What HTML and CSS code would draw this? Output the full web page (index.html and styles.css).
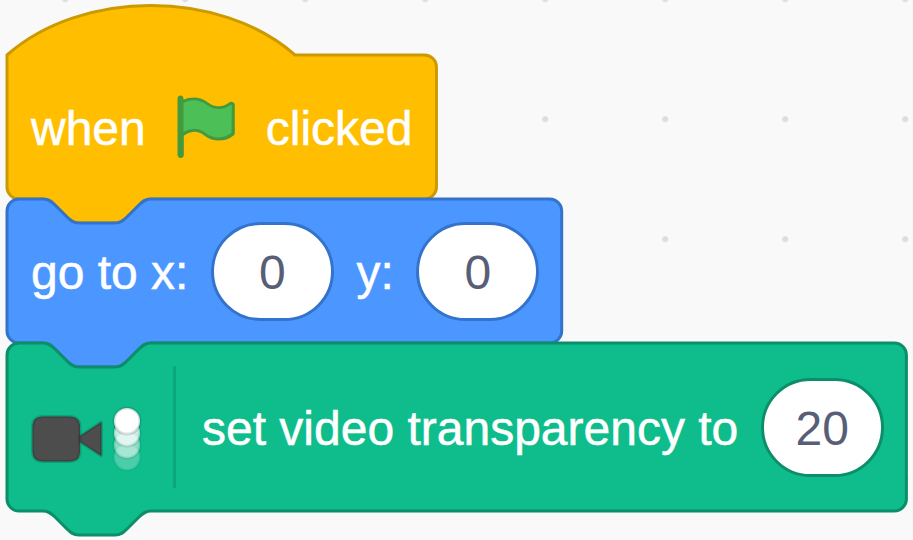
FILE: index.html
```html
<!DOCTYPE html>
<html lang="en">
<head>
<meta charset="utf-8">
<title>Blocks workspace</title>
<link rel="stylesheet" href="styles.css">
</head>
<body>
<main class="workspace">
  <div class="stack">
    <section class="block block-event">
      <svg class="shape" width="430" height="144" viewBox="0 0 143.33 48" aria-hidden="true">
        <path d="M0,0 c25,-22 71,-22 96,0 H139.15 a4,4 0 0,1 4,4 v40 a4,4 0 0,1 -4,4 H48 c-2,0 -3,1 -4,2 l-4,4 c-1,1 -2,2 -4,2 h-12 c-2,0 -3,-1 -4,-2 l-4,-4 c-1,-1 -2,-2 -4,-2 H4 a4,4 0 0,1 -4,-4 z"/>
      </svg>
      <span class="label">when</span>
      <svg class="flag" viewBox="0 0 24 24" aria-hidden="true">
        <path fill="#45993d" d="M20.8 3.7c-.4-.2-.9-.1-1.2.2-2 1.6-4.8 1.6-6.8 0-2.3-1.9-5.6-2.3-8.3-1v-.4c0-.6-.5-1-1-1s-1 .4-1 1v18.8c0 .5.5 1 1 1h.1c.5 0 1-.4 1-1v-6.4c1-.7 2.1-1.2 3.4-1.3 1.2 0 2.4.4 3.4 1.2 2.9 2.3 7 2.3 9.8 0 .3-.2.4-.5.4-.9V4.7c0-.5-.3-.9-.8-1z"/>
        <path fill="#4cbf56" d="M20.5 13.9C18 16 14.4 16 11.9 14c-1.1-.9-2.5-1.4-4-1.4-1.2.1-2.3.5-3.4 1.1V4c2.5-1.4 5.5-1.1 7.7.6 2.4 1.9 5.7 1.9 8.1 0h.1c.1 0 .1 0 .2.1z"/>
      </svg>
      <span class="label">clicked</span>
    </section>
    <section class="block block-motion">
      <svg class="shape" width="555" height="144" viewBox="0 0 185 48" aria-hidden="true">
        <path d="M0,4 A4,4 0 0,1 4,0 H12 c2,0 3,1 4,2 l4,4 c1,1 2,2 4,2 h12 c2,0 3,-1 4,-2 l4,-4 c1,-1 2,-2 4,-2 H180.9 a4,4 0 0,1 4,4 v40 a4,4 0 0,1 -4,4 H48 c-2,0 -3,1 -4,2 l-4,4 c-1,1 -2,2 -4,2 h-12 c-2,0 -3,-1 -4,-2 l-4,-4 c-1,-1 -2,-2 -4,-2 H4 a4,4 0 0,1 -4,-4 z"/>
      </svg>
      <span class="label">go to x:</span>
      <span class="value">0</span>
      <span class="label">y:</span>
      <span class="value">0</span>
    </section>
    <section class="block block-video">
      <svg class="shape" width="900" height="168" viewBox="0 0 300 56" aria-hidden="true">
        <path d="M0,4 A4,4 0 0,1 4,0 H12 c2,0 3,1 4,2 l4,4 c1,1 2,2 4,2 h12 c2,0 3,-1 4,-2 l4,-4 c1,-1 2,-2 4,-2 H295.8 a4,4 0 0,1 4,4 v48 a4,4 0 0,1 -4,4 H48 c-2,0 -3,1 -4,2 l-4,4 c-1,1 -2,2 -4,2 h-12 c-2,0 -3,-1 -4,-2 l-4,-4 c-1,-1 -2,-2 -4,-2 H4 a4,4 0 0,1 -4,-4 z"/>
      </svg>
      <svg class="camera" viewBox="0 0 120 120" aria-hidden="true">
        <g fill="#4d4d4d" stroke="#000" stroke-opacity=".15" stroke-width="3">
          <path d="M12 49.500H38.500Q49 49.500 49 60V84Q49 94.500 38.500 94.500H12Q1.500 94.500 1.500 84V60Q1.500 49.500 12 49.500z"/>
          <path d="M49 69L69.500 55.500Q70.500 54.500 70.500 56.500V87.500Q70.500 89.500 69.500 88.500L49 75z"/>
        </g>
        <g fill="#fff" stroke="#000" stroke-opacity=".12" stroke-width="3">
          <circle cx="96" cy="90" r="13" opacity=".25"/>
          <circle cx="96" cy="78" r="13" opacity=".5"/>
          <circle cx="96" cy="66" r="13" opacity=".75"/>
          <circle cx="96" cy="54" r="13"/>
        </g>
      </svg>
      <span class="divider"></span>
      <span class="label">set video transparency to</span>
      <span class="value">20</span>
    </section>
  </div>
</main>
</body>
</html>
```
FILE: styles.css
```css
* {
  box-sizing: border-box;
}

body {
  margin: 0;
}

.workspace {
  width: 913px;
  height: 540px;
  overflow: hidden;
  padding: 55px 0 0 7px;
  background-color: #f9f9f9;
  background-image: radial-gradient(circle, #ddd 2.6px, rgba(221, 221, 221, 0) 3.4px);
  background-size: 120px 120px;
  background-position: 5.200px 59.200px;
}

.stack {
  display: flex;
  flex-direction: column;
  align-items: flex-start;
  font-family: "Liberation Sans", Arial, sans-serif;
  font-size: 48px;
  line-height: 56px;
  color: #fff;
}

.block {
  position: relative;
  display: flex;
  align-items: center;
  gap: 24px;
  height: 144px;
  padding: 0 24px;
  white-space: nowrap;
}

.block-event {
  --fill: #ffbf00;
  --edge: #cc9900;
}

.block-motion {
  --fill: #4c97ff;
  --edge: #3373cc;
}

.block-video {
  --fill: #0fbd8c;
  --edge: #0b8e69;
  height: 168px;
}

.shape {
  position: absolute;
  top: 0;
  left: 0;
  overflow: visible;
  fill: var(--fill);
  stroke: var(--edge);
  stroke-width: 1;
}

.label,
.value,
.flag,
.camera,
.divider {
  position: relative;
  flex: none;
}

.label {
  padding-top: 4px;
  -webkit-text-stroke: .5px #fff;
}

.flag {
  width: 72px;
  height: 72px;
}

.value {
  width: 123px;
  height: 99px;
  margin: 0 -1.500px;
  padding-top: 1px;
  border: 3px solid var(--edge);
  border-radius: 50px;
  background: #fff;
  color: #575e75;
  line-height: 94px;
  text-align: center;
}

.camera {
  width: 120px;
  height: 120px;
}

.divider {
  width: 3px;
  height: 122px;
  margin: 0 2px 0 -2px;
  border-radius: 1px;
  background: var(--edge);
  opacity: .5;
}
```
